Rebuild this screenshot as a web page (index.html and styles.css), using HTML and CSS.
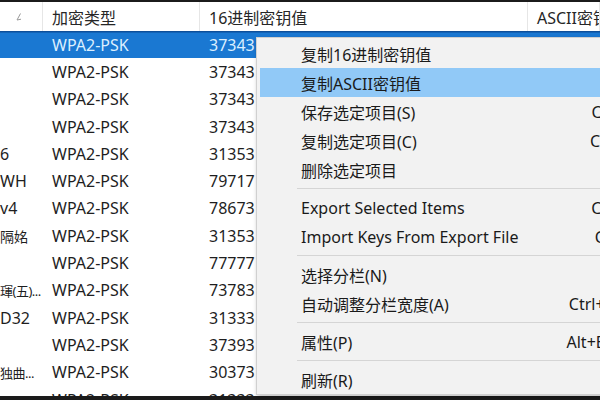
FILE: index.html
```html
<!DOCTYPE html>
<html lang="zh-CN">
<head>
<meta charset="utf-8">
<title>WirelessKeyView</title>
<link rel="stylesheet" href="styles.css">
</head>
<body>
<div class="frame">
  <div class="list">
    <div class="header">
      <div class="hcell sort"><svg width="10" height="10" viewBox="0 0 10 10"><path d="M6.5 1.5 L3 8 M3 8 L7 7.2" fill="none" stroke="#9a9a9a" stroke-width="1"/></svg></div>
      <div class="hcell">加密类型</div>
      <div class="hcell">16进制密钥值</div>
      <div class="hcell">ASCII密钥值</div>
    </div>
    <div class="row selected"><span class="c1"></span><span class="c2">WPA2-PSK</span><span class="c3">37343</span></div>
    <div class="row"><span class="c1"></span><span class="c2">WPA2-PSK</span><span class="c3">37343</span></div>
    <div class="row"><span class="c1"></span><span class="c2">WPA2-PSK</span><span class="c3">37343</span></div>
    <div class="row"><span class="c1"></span><span class="c2">WPA2-PSK</span><span class="c3">37343</span></div>
    <div class="row"><span class="c1">6</span><span class="c2">WPA2-PSK</span><span class="c3">31353</span></div>
    <div class="row"><span class="c1">WH</span><span class="c2">WPA2-PSK</span><span class="c3">79717</span></div>
    <div class="row"><span class="c1">v4</span><span class="c2">WPA2-PSK</span><span class="c3">78673</span></div>
    <div class="row"><span class="c1 mid">隔姳</span><span class="c2">WPA2-PSK</span><span class="c3">31353</span></div>
    <div class="row"><span class="c1"></span><span class="c2">WPA2-PSK</span><span class="c3">77777</span></div>
    <div class="row"><span class="c1 narrow">琿(五)...</span><span class="c2">WPA2-PSK</span><span class="c3">73783</span></div>
    <div class="row"><span class="c1">D32</span><span class="c2">WPA2-PSK</span><span class="c3">31333</span></div>
    <div class="row"><span class="c1"></span><span class="c2">WPA2-PSK</span><span class="c3">37393</span></div>
    <div class="row"><span class="c1 narrow">独曲...</span><span class="c2">WPA2-PSK</span><span class="c3">30373</span></div>
    <div class="row"><span class="c1"></span><span class="c2">WPA2-PSK</span><span class="c3">31333</span></div>
  </div>

  <div class="menu">
    <div class="item"><span>复制16进制密钥值</span><span class="key"></span></div>
    <div class="item hover"><span>复制ASCII密钥值</span><span class="key"></span></div>
    <div class="item"><span>保存选定项目(S)</span><span class="key">Ctrl+S</span></div>
    <div class="item"><span>复制选定项目(C)</span><span class="key">Ctrl+C</span></div>
    <div class="item"><span>删除选定项目</span><span class="key"></span></div>
    <div class="sep"></div>
    <div class="item"><span>Export Selected Items</span><span class="key">Ctrl+E</span></div>
    <div class="item"><span>Import Keys From Export File</span><span class="key">Ctrl+I</span></div>
    <div class="sep"></div>
    <div class="item"><span>选择分栏(N)</span><span class="key"></span></div>
    <div class="item"><span>自动调整分栏宽度(A)</span><span class="key">Ctrl+Plus</span></div>
    <div class="sep"></div>
    <div class="item"><span>属性(P)</span><span class="key">Alt+Enter</span></div>
    <div class="sep"></div>
    <div class="item"><span>刷新(R)</span><span class="key">F5</span></div>
  </div>
</div>
</body>
</html>
```

FILE: styles.css
```css
html, body {
  margin: 0;
  padding: 0;
}
body {
  width: 600px;
  height: 400px;
  overflow: hidden;
  background: #1b1b1b;
  font-family: "Noto Sans", "Noto Sans CJK SC", sans-serif;
  color: #1e1e1e;
}
.frame {
  position: relative;
  height: 400px;
  box-sizing: border-box;
  padding: 2px 0 4px 0;
  display: flex;
  flex-direction: column;
}
.list {
  flex: 1;
  background: #ffffff;
  overflow: hidden;
  font-size: 16px;
}
.header {
  display: grid;
  grid-template-columns: 43px 157px 328px 1fr;
  height: 29px;
}
.hcell {
  display: flex;
  align-items: center;
  padding-left: 9px;
  border-right: 1px solid #e6e6e6;
  white-space: nowrap;
  overflow: hidden;
  color: #262626;
}
.hcell.sort {
  padding-left: 14px;
}
.row {
  display: grid;
  grid-template-columns: 43px 157px 328px 1fr;
  height: 27.3px;
  align-items: center;
  white-space: nowrap;
}
.row span {
  overflow: hidden;
}
.c1 {
  padding-left: 0;
}
.c1.mid {
  font-size: 14px;
}
.c1.narrow {
  font-size: 13px;
  letter-spacing: -0.5px;
}
.c2, .c3 {
  padding-left: 9px;
}
.row.selected {
  background: #1a78d2;
  color: #dcefff;
  box-shadow: inset 0 2px 0 -0.5px #0d4f9a;
}
.menu {
  position: absolute;
  left: 256px;
  top: 37px;
  width: 400px;
  box-sizing: border-box;
  background: #f2f2f2;
  border: 1px solid #d0d0d0;
  box-shadow: 1px 2px 4px rgba(0, 0, 0, 0.25);
  padding-top: 1px;
  font-size: 16px;
  color: #1a1a1a;
}
.item {
  display: grid;
  grid-template-columns: 1fr auto;
  align-items: center;
  height: 29px;
  padding: 0 19px 0 44px;
  white-space: nowrap;
}
.item.hover {
  background: #91c9f7;
  margin-left: 3px;
  padding-left: 41px;
}
.key {
  text-align: right;
}
.sep {
  height: 9px;
  margin-left: 40px;
  background: linear-gradient(#d5d5d5, #d5d5d5) no-repeat 0 4px / 100% 1px;
}
```
